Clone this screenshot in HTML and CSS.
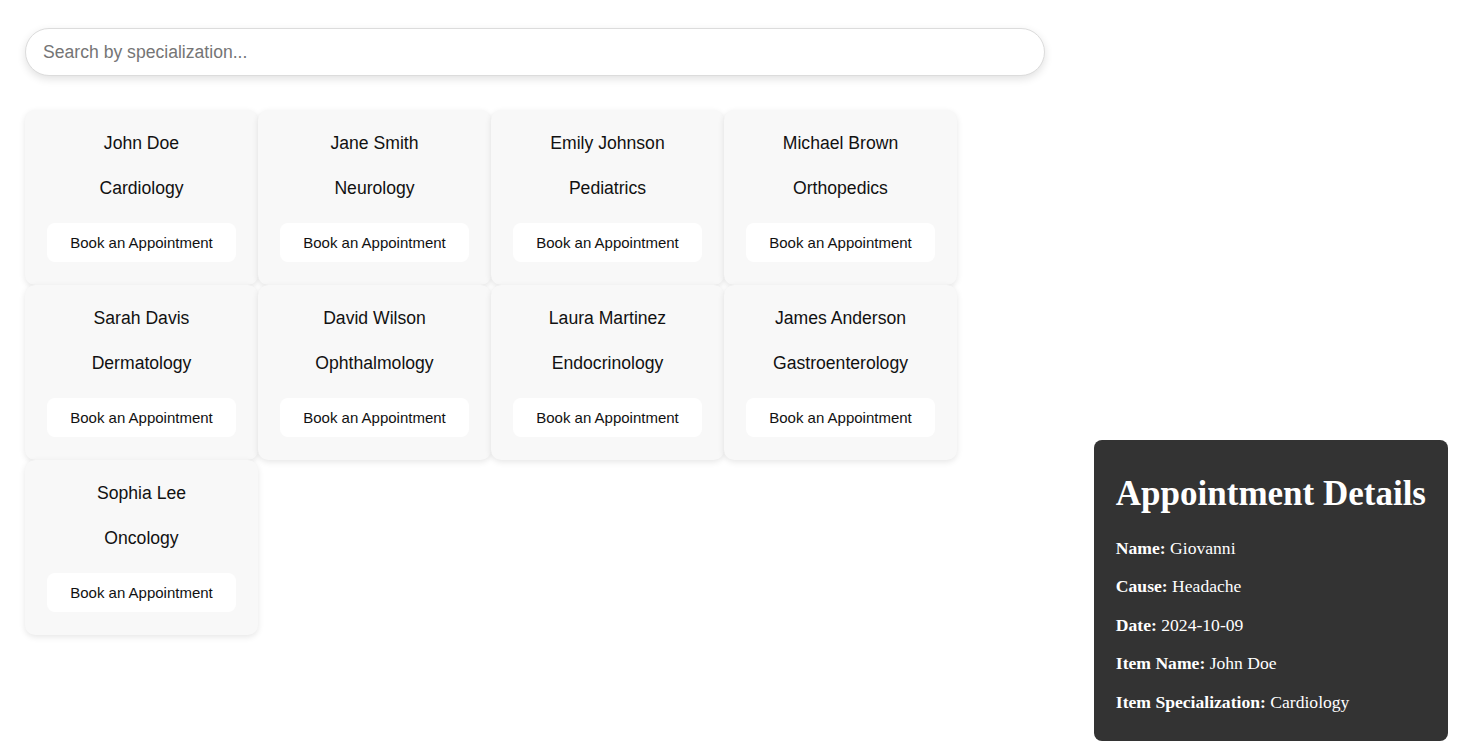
FILE: index.html
```html
<!DOCTYPE html>
<html>
<head>
<meta charset="utf-8">
<link rel="stylesheet" href="styles.css">
</head>
<body>
<div class="page">
  <input class="search" type="text" placeholder="Search by specialization...">
  <div class="grid">
    <div class="card"><p class="name">John Doe</p><p class="spec">Cardiology</p><button class="book">Book an Appointment</button></div>
    <div class="card"><p class="name">Jane Smith</p><p class="spec">Neurology</p><button class="book">Book an Appointment</button></div>
    <div class="card"><p class="name">Emily Johnson</p><p class="spec">Pediatrics</p><button class="book">Book an Appointment</button></div>
    <div class="card"><p class="name">Michael Brown</p><p class="spec">Orthopedics</p><button class="book">Book an Appointment</button></div>
    <div class="card"><p class="name">Sarah Davis</p><p class="spec">Dermatology</p><button class="book">Book an Appointment</button></div>
    <div class="card"><p class="name">David Wilson</p><p class="spec">Ophthalmology</p><button class="book">Book an Appointment</button></div>
    <div class="card"><p class="name">Laura Martinez</p><p class="spec">Endocrinology</p><button class="book">Book an Appointment</button></div>
    <div class="card"><p class="name">James Anderson</p><p class="spec">Gastroenterology</p><button class="book">Book an Appointment</button></div>
    <div class="card"><p class="name">Sophia Lee</p><p class="spec">Oncology</p><button class="book">Book an Appointment</button></div>
  </div>
</div>
<div class="details">
  <h2 class="details-title">Appointment Details</h2>
  <p class="row"><strong>Name:</strong> Giovanni</p>
  <p class="row"><strong>Cause:</strong> Headache</p>
  <p class="row"><strong>Date:</strong> 2024-10-09</p>
  <p class="row"><strong>Item Name:</strong> John Doe</p>
  <p class="row"><strong>Item Specialization:</strong> Cardiology</p>
</div>
</body>
</html>
```

FILE: styles.css
```css
html, body {
  margin: 0;
  padding: 0;
  background: #ffffff;
}

.page {
  padding: 28px 25px;
  font-family: "Liberation Sans", Arial, sans-serif;
}

.search {
  display: block;
  box-sizing: border-box;
  width: 1020px;
  height: 48px;
  padding: 1px 17px 0;
  border: 1px solid #dcdcdc;
  border-radius: 24px;
  font-family: "Liberation Sans", Arial, sans-serif;
  font-size: 17.6px;
  color: #222;
  background: #fff;
  box-shadow: 0 3px 8px rgba(0, 0, 0, 0.12);
  outline: none;
}

.search::placeholder {
  color: #757575;
}

.grid {
  margin-top: 34px;
  display: grid;
  grid-template-columns: repeat(4, 233px);
}

.card {
  box-sizing: border-box;
  height: 175px;
  padding: 21px 22px 23px;
  background: #f8f8f8;
  border-radius: 10px;
  box-shadow: 0 2px 6px rgba(0, 0, 0, 0.1);
  display: flex;
  flex-direction: column;
  align-items: stretch;
  text-align: center;
}

.name, .spec {
  margin: 0;
  font-size: 17.6px;
  line-height: 24px;
  color: #111;
}

.spec {
  margin-top: 21px;
}

.book {
  margin-top: 23px;
  height: 39px;
  border: none;
  border-radius: 8px;
  background: #ffffff;
  font-family: "Liberation Sans", Arial, sans-serif;
  font-size: 15px;
  color: #111;
  padding: 0;
}

.details {
  position: fixed;
  right: 14px;
  bottom: 14px;
  background: #333333;
  color: #ffffff;
  border-radius: 8px;
  padding: 12px 22px 11px;
  font-family: "Liberation Serif", "Times New Roman", serif;
}

.details-title {
  margin: 22px 0 24px;
  font-size: 35px;
  line-height: 40px;
  font-weight: bold;
}

.row {
  margin: 18px 0;
  font-size: 17.6px;
  line-height: 20.5px;
}

.details-title + .row {
  margin-top: 24px;
}
```
